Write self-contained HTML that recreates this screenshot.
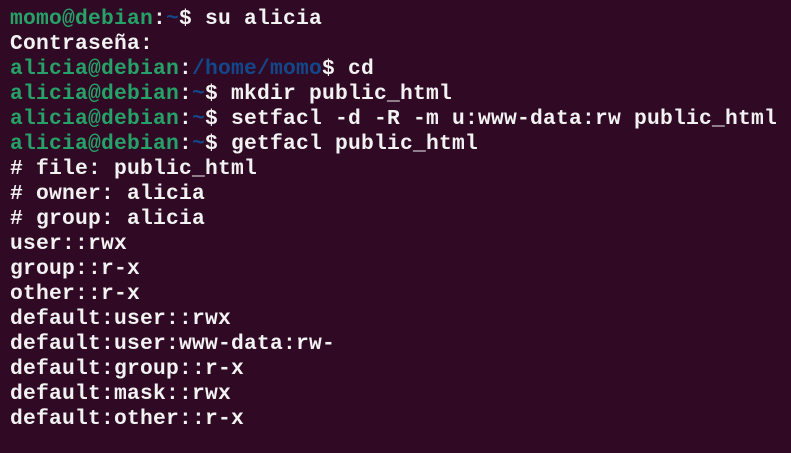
<!DOCTYPE html>
<html><head><meta charset="utf-8"><style>
html,body{margin:0;padding:0;background:#300a24;width:791px;height:453px;overflow:hidden}
pre{margin:0;position:absolute;left:10px;top:7px;font-family:"Liberation Mono","DejaVu Sans Mono",monospace;font-size:21.3px;letter-spacing:0.22px;line-height:25px;color:#f2f2f2;font-weight:bold}
.g{color:#26a269}.b{color:#12488b}
</style></head><body><pre><span class="g">momo@debian</span>:<span class="b">~</span>$ su alicia
Contraseña:
<span class="g">alicia@debian</span>:<span class="b">/home/momo</span>$ cd
<span class="g">alicia@debian</span>:<span class="b">~</span>$ mkdir public_html
<span class="g">alicia@debian</span>:<span class="b">~</span>$ setfacl -d -R -m u:www-data:rw public_html
<span class="g">alicia@debian</span>:<span class="b">~</span>$ getfacl public_html
# file: public_html
# owner: alicia
# group: alicia
user::rwx
group::r-x
other::r-x
default:user::rwx
default:user:www-data:rw-
default:group::r-x
default:mask::rwx
default:other::r-x</pre></body></html>
